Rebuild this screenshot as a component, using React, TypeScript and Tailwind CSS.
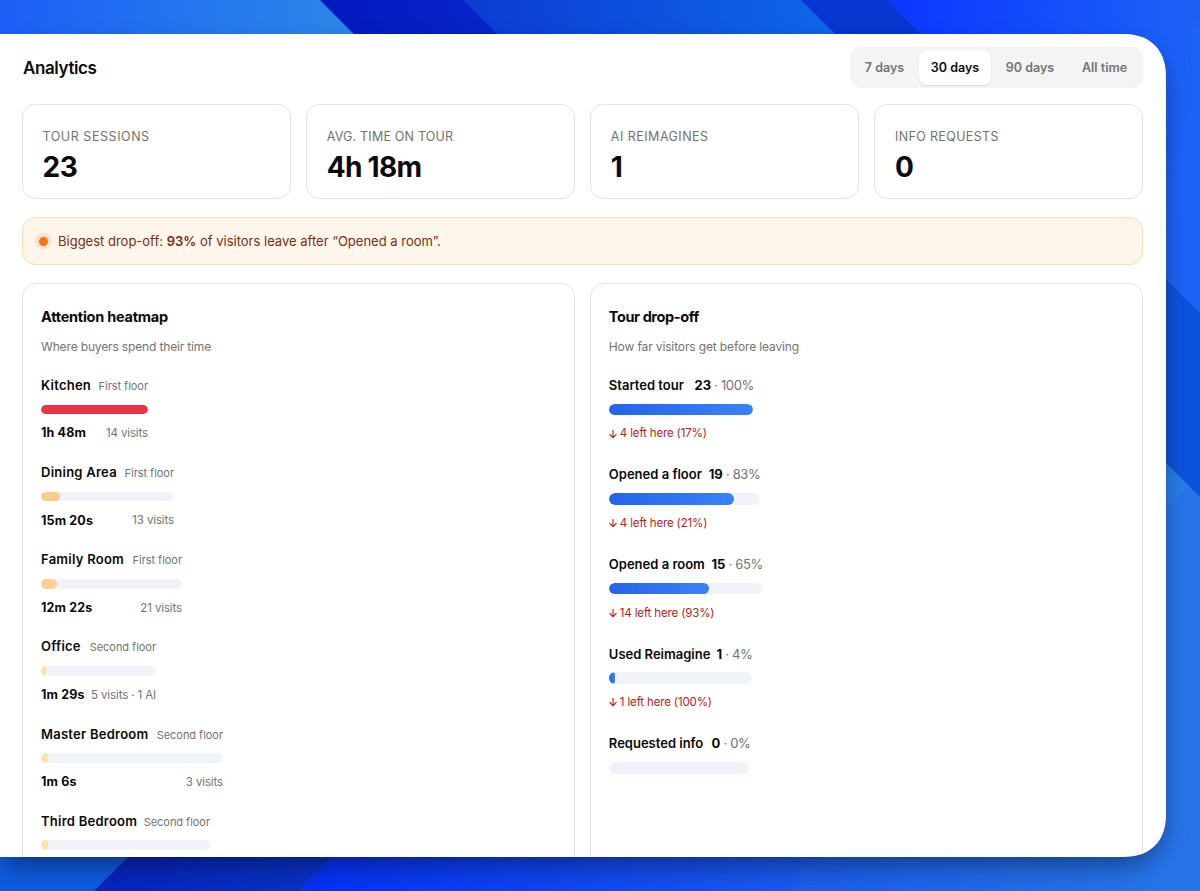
import { useState } from "react";
import clsx from "clsx";

type Stat = { label: string; value: string; labelClass: string; valueClass: string };

type Room = {
  name: string;
  floor: string;
  time?: string;
  visits?: string;
  width: string;
  fill: string;
  share: number;
};

type Step = {
  name: string;
  count: number;
  percent: number;
  left?: string;
  width: string;
};

const ranges = [
  { label: "7 days", width: "w-[69px]" },
  { label: "30 days", width: "w-[72px]" },
  { label: "90 days", width: "w-[78px]" },
  { label: "All time", width: "w-[71px]" }
];

const stats: Stat[] = [
  { label: "Tour sessions", value: "23", labelClass: "tracking-[0.55px]", valueClass: "tracking-[-0.3px]" },
  { label: "Avg. time on tour", value: "4h 18m", labelClass: "tracking-[0.2px]", valueClass: "tracking-[-0.7px]" },
  { label: "AI reimagines", value: "1", labelClass: "tracking-[0.48px]", valueClass: "tracking-[-0.3px]" },
  { label: "Info requests", value: "0", labelClass: "tracking-[0.35px]", valueClass: "tracking-[-0.3px]" }
];

const rooms: Room[] = [
  { name: "Kitchen", floor: "First floor", time: "1h 48m", visits: "14 visits", width: "w-[107px]", fill: "bg-[#e63548]", share: 100 },
  { name: "Dining Area", floor: "First floor", time: "15m 20s", visits: "13 visits", width: "w-[133px]", fill: "bg-[#fecb8c]", share: 14.2 },
  { name: "Family Room", floor: "First floor", time: "12m 22s", visits: "21 visits", width: "w-[141px]", fill: "bg-[#fecf92]", share: 11.4 },
  { name: "Office", floor: "Second floor", time: "1m 29s", visits: "5 visits · 1 AI", width: "w-[115px]", fill: "bg-[#fee3a5]", share: 4 },
  { name: "Master Bedroom", floor: "Second floor", time: "1m 6s", visits: "3 visits", width: "w-[182px]", fill: "bg-[#fee4a6]", share: 4 },
  { name: "Third Bedroom", floor: "Second floor", width: "w-[169px]", fill: "bg-[#fee4a6]", share: 4.2 }
];

const steps: Step[] = [
  { name: "Started tour", count: 23, percent: 100, left: "4 left here (17%)", width: "w-[144.5px]" },
  { name: "Opened a floor", count: 19, percent: 83, left: "4 left here (21%)", width: "w-[151px]" },
  { name: "Opened a room", count: 15, percent: 65, left: "14 left here (93%)", width: "w-[153.5px]" },
  { name: "Used Reimagine", count: 1, percent: 4, left: "1 left here (100%)", width: "w-[143px]" },
  { name: "Requested info", count: 0, percent: 0, width: "w-[141px]" }
];

function Wallpaper() {
  return (
    <svg viewBox="0 0 1200 891" className="absolute inset-0 h-full w-full" aria-hidden="true">
      <defs>
        <linearGradient id="a" gradientUnits="userSpaceOnUse" x1="0" y1="0" x2="350" y2="0">
          <stop stopColor="#1c5ff6" />
          <stop offset="1" stopColor="#2b87e8" />
        </linearGradient>
        <linearGradient id="b" gradientUnits="userSpaceOnUse" x1="320" y1="0" x2="497" y2="0">
          <stop stopColor="#0418bf" />
          <stop offset="1" stopColor="#0625c8" />
        </linearGradient>
        <linearGradient id="c" gradientUnits="userSpaceOnUse" x1="464" y1="0" x2="834" y2="0">
          <stop stopColor="#0c3bd2" />
          <stop offset="1" stopColor="#0f66e8" />
        </linearGradient>
        <linearGradient id="e" gradientUnits="userSpaceOnUse" x1="900" y1="0" x2="1200" y2="34">
          <stop stopColor="#0b38ff" />
          <stop offset="1" stopColor="#1d63f6" />
        </linearGradient>
        <linearGradient id="g" gradientUnits="userSpaceOnUse" x1="94" y1="0" x2="333" y2="0">
          <stop stopColor="#0723bd" />
          <stop offset="1" stopColor="#0933c6" />
        </linearGradient>
        <linearGradient id="h" gradientUnits="userSpaceOnUse" x1="300" y1="0" x2="1200" y2="0">
          <stop stopColor="#0530f6" />
          <stop offset="0.53" stopColor="#1958ec" />
          <stop offset="0.96" stopColor="#2774e9" />
        </linearGradient>
      </defs>
      <path d="M0 0H320L353 34V60H0Z" fill="url(#a)" />
      <path d="M320 0H464L524 60H380Z" fill="url(#b)" />
      <path d="M463.500 0H801L861 60H523Z" fill="url(#c)" />
      <path d="M801 0H888L948 60H861Z" fill="#0936d0" />
      <path d="M887.500 0H1200V330H1100V210Z" fill="url(#e)" />
      <path d="M1174 0H1200V27Z" fill="#1c5ff4" />
      <path d="M1120 234L1200 313V497L1120 418Z" fill="#0c53dc" />
      <path d="M1120 418L1200 497V891H1120Z" fill="#2774e9" />
      <path d="M1150 447.500L1189 486L1150 524Z" fill="#297ce8" />
      <path d="M0 830H155L94 891H0Z" fill="#0f5bdf" />
      <path d="M155 830H360L299 891H94Z" fill="url(#g)" />
      <path d="M360 830H1200V891H299Z" fill="url(#h)" />
      <path d="M846 830H1150V891H785Z" fill="#2a78e0" fillOpacity="0.12" />
    </svg>
  );
}

function DownArrow() {
  return (
    <svg viewBox="0 0 8 10" className="mr-[3px] mb-px h-[10px] w-2 shrink-0" fill="none" stroke="currentColor" strokeWidth="1.1">
      <path d="M4 1V8.600M0.500 5.200L4 8.700L7.500 5.200" />
    </svg>
  );
}

function StatCard({ stat }: { stat: Stat }) {
  return (
    <div className="flex h-[95px] flex-col rounded-[13px] border border-[#e4e4e4] bg-white px-[19.5px] pt-[22px]">
      <p className={clsx("text-[12.5px] leading-5 text-[#737373] uppercase", stat.labelClass)}>{stat.label}</p>
      <p className={clsx("mt-[3px] text-[28px] leading-[34px] font-bold text-[#0a0a0a]", stat.valueClass)}>{stat.value}</p>
    </div>
  );
}

function RoomRow({ room }: { room: Room }) {
  return (
    <li className={clsx("flex flex-col whitespace-nowrap", room.width)}>
      <div className="flex h-5 items-center justify-between">
        <span className="text-[13px] font-semibold tracking-[0.25px] text-[#0a0a0a]">{room.name}</span>
        <span className="pt-px text-[11px] tracking-[-0.04px] text-[#737373]">{room.floor}</span>
      </div>
      <div className="mt-[9px] h-[9.800px] overflow-hidden rounded-full bg-[#f0f4f9]">
        <div className={clsx("h-full min-w-[4px] rounded-full", room.fill)} style={{ width: `${room.share}%` }} />
      </div>
      {room.time ? (
        <div className="mt-[9px] flex h-5 items-center justify-between pt-px">
          <span className="text-[12.5px] font-bold tracking-[0.15px] text-[#0a0a0a]">{room.time}</span>
          <span className="text-[11.5px] tracking-[-0.12px] text-[#737373]">{room.visits}</span>
        </div>
      ) : null}
    </li>
  );
}

function StepRow({ step }: { step: Step }) {
  return (
    <li className={clsx("flex flex-col whitespace-nowrap", step.width)}>
      <div className="flex h-5 items-center justify-between pt-px text-[13px]">
        <span className="font-semibold text-[#0a0a0a]">{step.name}</span>
        <span className="-mr-[0.5px] tracking-[-0.4px] text-[#737373]">
          <strong className="font-bold tracking-normal text-[#0a0a0a]">{step.count}</strong> · {step.percent}%
        </span>
      </div>
      <div className="mt-[8.500px] h-[11.800px] overflow-hidden rounded-full bg-[#f0f4f9]">
        <div
          className="h-full rounded-full bg-linear-to-r from-[#2563eb] to-[#3b82f6]"
          style={{ width: `${step.percent}%` }}
        />
      </div>
      {step.left ? (
        <p className="mt-[8.300px] flex h-5 items-center pt-px text-[11.5px] tracking-[-0.15px] text-[#b91c1c]">
          <DownArrow />
          {step.left}
        </p>
      ) : null}
    </li>
  );
}

export default function App() {
  const [range, setRange] = useState("30 days");

  return (
    <div className="relative h-[891px] w-[1200px] overflow-hidden bg-[#1c5ff6] pt-[34px] font-['Inter','Liberation_Sans',sans-serif]">
      <Wallpaper />
      <main className="relative h-[823px] w-[1166px] rounded-r-[43px] shadow-[0_12px_26px_-4px_rgba(0,0,0,0.42)] [corner-shape:superellipse(1.2)]">
        <div className="h-full overflow-hidden rounded-r-[43px] bg-white pr-[23px] pl-[22px] [corner-shape:superellipse(1.2)]">
          <header className="flex h-[70px] items-start justify-between pt-[13px]">
            <h1 className="pt-[9px] pl-px text-[17px] leading-6 font-semibold tracking-[-0.4px] text-[#0a0a0a]">Analytics</h1>
            <div className="flex h-[41px] rounded-[11px] bg-[#f4f4f4] py-[3px] pr-[3px]">
              {ranges.map((item) => (
                <button
                  key={item.label}
                  type="button"
                  onClick={() => setRange(item.label)}
                  className={clsx(
                    "h-[35px] rounded-[8px] pt-px text-[12.5px] font-semibold",
                    item.width,
                    item.label === range ? "bg-white text-[#0a0a0a] shadow-[0_1px_2px_rgba(0,0,0,0.1)]" : "text-[#737373]"
                  )}
                >
                  {item.label}
                </button>
              ))}
            </div>
          </header>

          <section className="grid grid-cols-4 gap-[15.670px]">
            {stats.map((stat) => (
              <StatCard key={stat.label} stat={stat} />
            ))}
          </section>

          <div className="mt-[18px] flex h-12 items-center rounded-[13px] border border-[#fedeb5] bg-[#fff6eb] pl-3 text-[13px] text-[#7c2d12]">
            <span className="mr-[7px] grid size-4 place-items-center rounded-full bg-[#fee0cc]">
              <span className="size-[9px] rounded-full bg-[#f97316]" />
            </span>
            <p className="pt-px">
              Biggest drop-off: <strong className="font-semibold">93%</strong> of visitors leave after “Opened a room”.
            </p>
          </div>

          <div className="mt-[18px] grid grid-cols-2 gap-[15.670px]">
            <section className="h-[640px] rounded-[14px] border border-[#e4e4e4] px-[18px] pt-[23px]">
              <h2 className="text-[14.5px] leading-5 font-bold tracking-[-0.24px] text-[#0a0a0a]">Attention heatmap</h2>
              <p className="mt-[10px] text-xs leading-5 tracking-[-0.15px] text-[#737373]">Where buyers spend their time</p>
              <ul className="mt-[18.500px] flex flex-col gap-[19.400px]">
                {rooms.map((room) => (
                  <RoomRow key={room.name} room={room} />
                ))}
              </ul>
            </section>
            <section className="h-[640px] rounded-[14px] border border-[#e4e4e4] px-[17.5px] pt-[23px]">
              <h2 className="text-[14.5px] leading-5 font-bold tracking-[-0.4px] text-[#0a0a0a]">Tour drop-off</h2>
              <p className="mt-[10px] text-xs leading-5 tracking-[-0.13px] text-[#737373]">How far visitors get before leaving</p>
              <ul className="mt-[18px] flex flex-col gap-[21px]">
                {steps.map((step) => (
                  <StepRow key={step.name} step={step} />
                ))}
              </ul>
            </section>
          </div>
        </div>
      </main>
    </div>
  );
}
